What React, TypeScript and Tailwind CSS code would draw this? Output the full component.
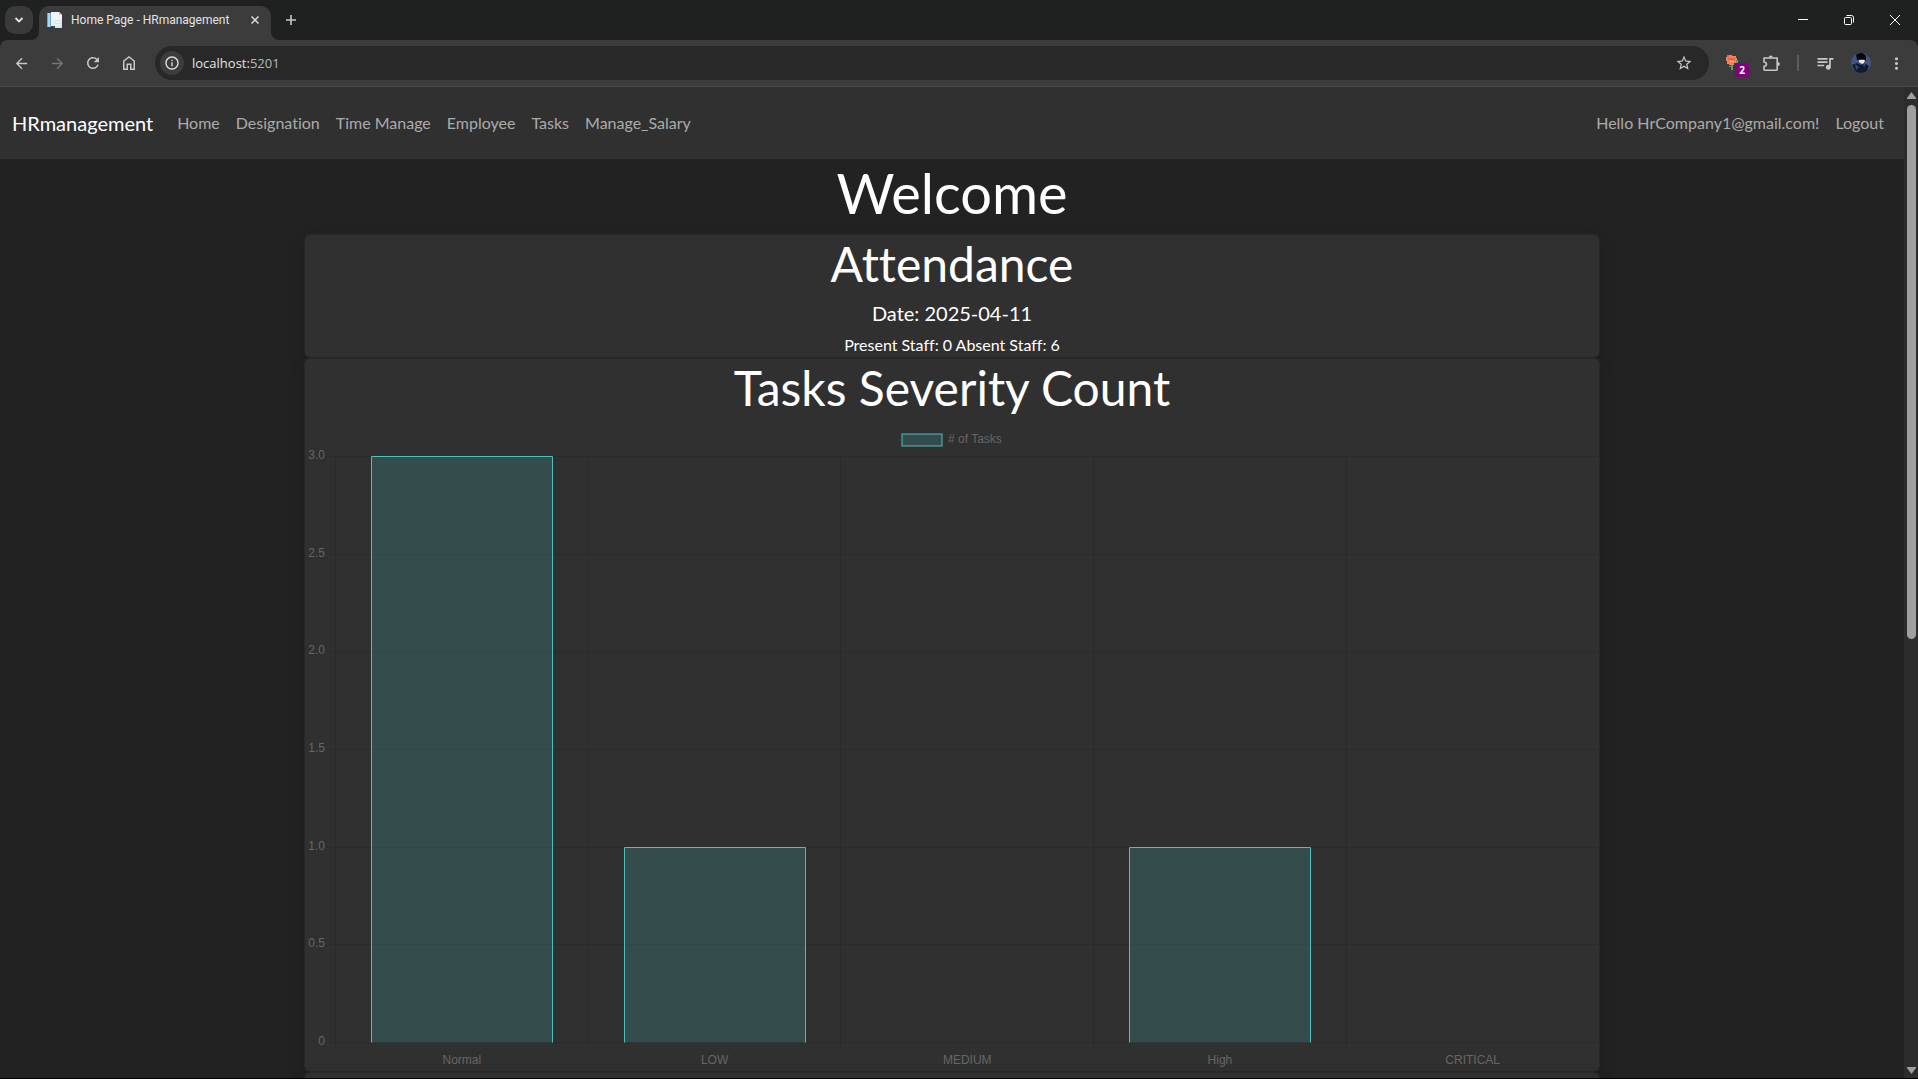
import type { ReactNode } from "react";
import {
    MdArrowBack,
    MdArrowForward,
    MdInfoOutline,
    MdMoreVert,
    MdOutlineQueueMusic,
    MdRefresh,
    MdStarBorder,
} from "react-icons/md";

const NAV_LINKS = ["Home", "Designation", "Time Manage", "Employee", "Tasks", "Manage_Salary"];

const SEVERITIES = [
    { label: "Normal", count: 3 },
    { label: "LOW", count: 1 },
    { label: "MEDIUM", count: 0 },
    { label: "High", count: 1 },
    { label: "CRITICAL", count: 0 },
];

const TICKS = ["0", "0.5", "1.0", "1.5", "2.0", "2.5", "3.0"];

// ---- browser chrome ----

function ToolButton({ label, children }: { label: string; children: ReactNode }) {
    return (
        <button aria-label={label} className="flex h-7 w-9 items-center justify-center text-[#c7c7c7]">
            {children}
        </button>
    );
}

function TabStrip() {
    return (
        <div className="flex h-10 items-end bg-[#1f2020] pl-[5px]">
            <button
                aria-label="Search tabs"
                className="mb-1.5 flex h-7 w-7 items-center justify-center rounded-[10px] bg-[#3a3a3a]"
            >
                <svg width="10" height="8" viewBox="0 0 10 8" fill="none" stroke="#e3e3e3" strokeWidth="1.8">
                    <path d="M1.5 2 5 5.5 8.5 2" />
                </svg>
            </button>

            <div className="relative ml-1.5 flex h-[34px] w-[232px] items-center rounded-t-[10px] bg-[#3c3c3c] px-2 pb-1.5">
                {/* curved feet of the active tab */}
                <svg className="absolute bottom-0 -left-2" width="8" height="8" viewBox="0 0 8 8" fill="#3c3c3c">
                    <path d="M8 0v8H0a8 8 0 0 0 8-8Z" />
                </svg>
                <svg className="absolute -right-2 bottom-0" width="8" height="8" viewBox="0 0 8 8" fill="#3c3c3c">
                    <path d="M0 0v8h8a8 8 0 0 1-8-8Z" />
                </svg>
                <svg width="16" height="16" viewBox="0 0 16 16">
                    <path d="M0 1h4v14H0z" fill="#5fa8d8" />
                    <path d="M1 1h2v14H1z" fill="#a9d4ee" />
                    <path d="M4 0h8l3 3v11H4z" fill="#eef4f8" />
                    <path d="M12 0v3h3z" fill="#bccfdb" />
                    <path d="M7 8h8v8H8z" fill="#d9e5ed" />
                    <path d="M8 10h6M8 13h6" stroke="#fff" />
                </svg>
                <span className="ml-2 flex-1 font-['Roboto',sans-serif] text-[12px] leading-4 whitespace-nowrap text-[#e3e3e3]">
                    Home Page - HRmanagement
                </span>
                <button aria-label="Close tab" className="flex h-4 w-4 items-center justify-center">
                    <svg width="8" height="8" viewBox="0 0 8 8" stroke="#dedede" strokeWidth="1.5">
                        <path d="m.5.5 7 7m0-7-7 7" />
                    </svg>
                </button>
            </div>

            <button aria-label="New tab" className="mb-1.5 ml-1.5 flex h-7 w-7 items-center justify-center">
                <svg width="10" height="10" viewBox="0 0 10 10" stroke="#c7c7c7" strokeWidth="1.6">
                    <path d="M5 0v10M0 5h10" />
                </svg>
            </button>

            <div className="ml-auto flex h-10 text-white">
                <button aria-label="Minimize" className="flex w-[46px] items-center justify-center">
                    <svg width="10" height="10" viewBox="0 0 10 10" stroke="currentColor">
                        <path d="M0 4.5h10" />
                    </svg>
                </button>
                <button aria-label="Restore" className="flex w-[46px] items-center justify-center">
                    <svg width="10" height="10" viewBox="0 0 10 10" fill="none" stroke="currentColor">
                        <rect x=".5" y="2.5" width="7" height="7" rx="1" />
                        <path d="M2.5.5h5a2 2 0 0 1 2 2v5" />
                    </svg>
                </button>
                <button aria-label="Close" className="flex w-[46px] items-center justify-center">
                    <svg width="10" height="10" viewBox="0 0 10 10" stroke="currentColor">
                        <path d="m0 0 10 10M10 0 0 10" />
                    </svg>
                </button>
            </div>
        </div>
    );
}

function Toolbar() {
    return (
        <div className="bg-[#1f2020]">
            <div className="flex h-[47px] items-center rounded-t-lg border-b border-[#4a4a4a] bg-[#3c3c3c] pl-[3px]">
                <ToolButton label="Back">
                    <MdArrowBack size={17} />
                </ToolButton>
                <button aria-label="Forward" disabled className="flex h-7 w-9 items-center justify-center text-[#757575]">
                    <MdArrowForward size={17} />
                </button>
                <ToolButton label="Reload">
                    <MdRefresh size={18} />
                </ToolButton>
                <ToolButton label="Home page">
                    <svg width="12" height="14" viewBox="0 0 12 14" fill="none" stroke="currentColor" strokeWidth="1.5">
                        <path d="M.75 5 6 1l5.25 4v8.25h-3.5v-5h-3.5v5H.75Z" />
                    </svg>
                </ToolButton>

                <div className="ml-2 flex h-[34px] flex-1 items-center rounded-full bg-[#282828] pr-4 pl-[5px]">
                    <button
                        aria-label="Site information"
                        className="flex h-6 w-6 items-center justify-center rounded-full bg-[#3c3c3c] text-[#e3e3e3]"
                    >
                        <MdInfoOutline size={16} />
                    </button>
                    <div className="ml-2 flex-1 text-[13px] leading-5 text-[#e3e3e3]">
                        localhost:<span className="text-[#b8b8b8]">5201</span>
                    </div>
                    <button aria-label="Bookmark this page" className="text-[#c7c7c7]">
                        <MdStarBorder size={18} />
                    </button>
                </div>

                <button aria-label="Extension, 2 items" className="relative ml-3 h-6 w-7">
                    <svg width="16" height="16" viewBox="0 0 16 16" className="ml-1">
                        <path d="M1 2h3V0h3v1h4v2h1v5H9v2H4V9H2V6H1z" fill="#f08262" />
                        <path d="M3 3h7v2H3zM2 0h2v2H2z" fill="#ff5a36" />
                        <path d="M5 6h4v1H5z" fill="#ffb59c" />
                        <path d="M6 10h2v5H6zM4 11h2v1H4zM11 5h2v3h-2z" fill="#5d9c6b" />
                    </svg>
                    <span className="absolute right-0 -bottom-0.5 flex h-3.5 w-3.5 items-center justify-center rounded-[3px] bg-[#800080] text-[10px] leading-3 font-bold text-white">
                        2
                    </span>
                </button>
                <button aria-label="Extensions" className="ml-2 flex h-7 w-7 items-center justify-center text-[#c7c7c7]">
                    <svg width="17" height="17" viewBox="0 0 17 17">
                        <path
                            d="M1 3h13.2v11.2q0 1.1-1.1 1.1H2.2Q1 15.3 1 14.2v-2.800q2.500-.4 2.500-2.200T1 7V3Z"
                            fill="none"
                            stroke="currentColor"
                            strokeWidth="1.6"
                            strokeLinejoin="round"
                        />
                        <path d="M5.800 2.400a2 2 0 0 1 4 0zM14.800 7a2 2 0 0 1 0 4z" fill="currentColor" />
                    </svg>
                </button>
                <span className="mx-3 h-4 w-0.5 bg-[#5c5c5c]" />
                <button aria-label="Media controls" className="flex h-7 w-7 items-center justify-center text-[#c7c7c7]">
                    <MdOutlineQueueMusic size={20} />
                </button>
                <button aria-label="Profile" className="ml-3 h-5 w-5">
                    <svg width="20" height="20" viewBox="0 0 20 20">
                        <clipPath id="avatar">
                            <circle cx="10" cy="10" r="10" />
                        </clipPath>
                        <g clipPath="url(#avatar)">
                            <path d="M0 0h20v20H0z" fill="#3f5688" />
                            <path d="m5 2 3-2h4l3 3v5l-3-2-6 1z" fill="#060609" />
                            <path d="M8 7h6l-1 3-2 1-3-2z" fill="#f1e5e2" />
                            <path d="m1 12 5-2 4 2 4-2 4 3-3 7H5z" fill="#101a2c" />
                            <path d="m4 11 4 3-3 3zm8 1 4-5 1 1-4 6z" fill="#2c4d78" />
                            <path d="m14 9 4-2v2l-3 2z" fill="#6b4b52" />
                        </g>
                    </svg>
                </button>
                <button
                    aria-label="Browser menu"
                    className="mr-3 ml-4 flex h-7 w-[19px] items-center justify-center text-[#c7c7c7]"
                >
                    <MdMoreVert size={19} className="shrink-0" />
                </button>
            </div>
        </div>
    );
}

function Scrollbar() {
    return (
        <div className="flex w-3.5 shrink-0 flex-col items-center bg-[#2c2c2c] py-1">
            <svg width="9" height="7" viewBox="0 0 9 7" fill="#9f9f9f" className="mt-px">
                <path d="M4.500 0 9 6v1H0V6z" />
            </svg>
            <div className="mt-1.5 mb-2 w-full flex-1 px-[3px]">
                <div className="h-[56%] w-[9px] rounded-full bg-[#9f9f9f]" />
            </div>
            <svg width="9" height="7" viewBox="0 0 9 7" fill="#9f9f9f">
                <path d="M4.500 7 0 1V0h9v1z" />
            </svg>
        </div>
    );
}

// ---- page ----

function Navbar() {
    return (
        <nav className="flex h-[72px] items-center bg-[#303030] px-3 text-base text-white/60">
            <a href="#" className="mr-4 text-xl whitespace-nowrap text-white">
                HRmanagement
            </a>
            <ul className="flex flex-1">
                {NAV_LINKS.map((link) => (
                    <li key={link}>
                        <a href="#" className="block p-2 whitespace-nowrap">
                            {link}
                        </a>
                    </li>
                ))}
            </ul>
            <a href="#" className="p-2">
                Hello HrCompany1@gmail.com!
            </a>
            <button className="p-2">Logout</button>
        </nav>
    );
}

function Card({ children }: { children?: ReactNode }) {
    return (
        <section className="rounded-md border border-black/15 bg-[#303030] text-center shadow-[0_8px_16px_rgba(0,0,0,0.15)]">
            {children}
        </section>
    );
}

// Plot area inside the 1294x646 view box
const LEFT = 30.5;
const RIGHT = 1294;
const TOP = 31.5;
const BOTTOM = 617.5;
const STEP = (RIGHT - LEFT) / SEVERITIES.length;
const BAR = STEP * 0.72;

function SeverityChart() {
    const y = (value: number) => BOTTOM - ((BOTTOM - TOP) * value) / 3;

    return (
        <svg viewBox="0 0 1294 646" className="block w-full font-['Liberation_Sans',sans-serif] text-[12px]" fill="#666">
            <rect x="597" y="9" width="40" height="12" fill="#4bc0c0" fillOpacity="0.2" stroke="#4bc0c0" />
            <text x="643" y="18">
                # of Tasks
            </text>

            {TICKS.map((tick, i) => (
                <g key={tick}>
                    <path d={`M22 ${Math.floor(y(i / 2)) + 0.5}H${RIGHT}`} stroke="#000" strokeOpacity="0.1" />
                    <text x="20" y={Math.floor(y(i / 2)) + 3} textAnchor="end">
                        {tick}
                    </text>
                </g>
            ))}

            {SEVERITIES.map((s, i) => {
                const x = LEFT + i * STEP;
                const left = Math.round(x + (STEP - BAR) / 2) + 0.5;
                return (
                    <g key={s.label}>
                        <path d={`M${Math.floor(x) + 0.5} ${TOP}V626`} stroke="#000" strokeOpacity="0.1" />
                        {s.count > 0 && (
                            <path
                                d={`M${left} ${BOTTOM}V${Math.floor(y(s.count)) + 0.5}h181V${BOTTOM}`}
                                fill="#4bc0c0"
                                fillOpacity="0.2"
                                stroke="#4bc0c0"
                            />
                        )}
                        <text x={x + STEP / 2} y="639" textAnchor="middle">
                            {s.label}
                        </text>
                    </g>
                );
            })}
        </svg>
    );
}

export default function App() {
    return (
        <div className="flex h-screen flex-col overflow-hidden border-b border-black bg-[#222] font-['Open_Sans',sans-serif]">
            <TabStrip />
            <Toolbar />

            <div className="flex min-h-0 flex-1">
                <div className="flex-1 overflow-hidden font-['Lato',sans-serif] text-white [font-variant-ligatures:none]">
                    <Navbar />
                    <main className="mx-auto max-w-[1320px] px-3">
                        <h1 className="mb-2 text-center text-[56px] leading-[67px]">Welcome</h1>

                        <Card>
                            <h2 className="mb-2 text-5xl leading-[58px]">Attendance</h2>
                            <h3 className="mb-2 text-xl leading-6">Date: 2025-04-11</h3>
                            <p className="text-base">Present Staff: 0 Absent Staff: 6</p>
                        </Card>

                        <Card>
                            <h2 className="mb-2 text-5xl leading-[58px]">Tasks Severity Count</h2>
                            <SeverityChart />
                        </Card>

                        <Card>
                            <div className="h-24" />
                        </Card>
                    </main>
                </div>
                <Scrollbar />
            </div>
        </div>
    );
}
